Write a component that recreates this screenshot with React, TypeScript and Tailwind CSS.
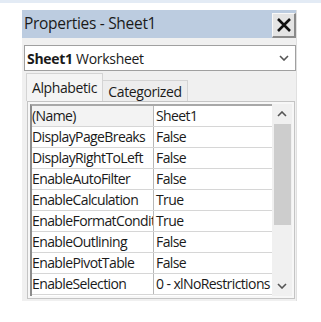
const rows: [string, string][] = [
  ['(Name)', 'Sheet1'],
  ['DisplayPageBreaks', 'False'],
  ['DisplayRightToLeft', 'False'],
  ['EnableAutoFilter', 'False'],
  ['EnableCalculation', 'True'],
  ['EnableFormatConditionsCalculation', 'True'],
  ['EnableOutlining', 'False'],
  ['EnablePivotTable', 'False'],
  ['EnableSelection', '0 - xlNoRestrictions'],
];

function Chevron({ up }: { up?: boolean }) {
  return (
    <svg width="10" height="6" viewBox="0 0 10 6" className={up ? 'rotate-180' : ''}>
      <path d="M1 1 L5 5 L9 1" fill="none" stroke="#555" strokeWidth="1.6" />
    </svg>
  );
}

export default function App() {
  return (
    <div
      className="w-[321px] h-[322px] bg-white overflow-hidden text-[#1a1a1a]"
      style={{ fontFamily: '"Open Sans", "Noto Sans", sans-serif' }}
    >
      <div className="h-[3px] bg-[#e3ebf5]" />
      <div className="ml-[22px] mt-[7px] w-[275px] h-[291px] bg-[#f0f0f0] border-r border-[#e0e0e0] flex flex-col">
        <div className="h-[28px] bg-[#bccce0] flex items-center justify-between pl-[2px]">
          <span className="text-[15.5px] leading-none tracking-[-0.3px]">Properties - Sheet1</span>
          <div className="w-[24px] h-[25px] mt-[3px] bg-[#e4e4e4] border-l border-t border-[#f8f8f8] border-r-2 border-b-2 border-r-[#8a8a8a] border-b-[#8a8a8a] flex items-center justify-center">
            <svg width="16" height="16" viewBox="0 0 16 16">
              <path d="M2 2 L14 14 M14 2 L2 14" stroke="#111" strokeWidth="2.6" />
            </svg>
          </div>
        </div>

        <div className="mt-[7px] ml-[2px] h-[26px] w-[272px] bg-white border border-[#a0a0a0] flex items-center justify-between pl-[2px] pr-[6px] text-[14px] tracking-[-0.3px]">
          <span>
            <span className="font-bold">Sheet1</span> Worksheet
          </span>
          <Chevron />
        </div>

        <div className="flex items-end ml-[4px] h-[30px]">
          <div className="w-[77px] h-[28px] border border-b-0 border-[#d4d4d4] bg-[#f4f4f4] flex items-center justify-center text-[14px] tracking-[-0.4px]">
            Alphabetic
          </div>
          <div className="w-[85px] h-[21px] border border-l-0 border-b-0 border-[#d4d4d4] bg-[#ededed] flex items-center justify-center text-[14px] tracking-[-0.4px]">
            Categorized
          </div>
        </div>

        <div className="ml-[5px] w-[268px] h-[198px] border border-[#c4c4c4] bg-[#f7f7f7] p-[2px] flex">
          <div className="flex-1 flex flex-col border-l-2 border-t-2 border-l-[#8c8c8c] border-t-[#a8a8a8] bg-white">
            {rows.map(([name, value], i) => (
              <div key={name} className="h-[21px] flex border-b border-[#d6d6d6] text-[14px] leading-none tracking-[-0.6px]">
                <div
                  className={`w-[122px] shrink-0 overflow-hidden whitespace-nowrap flex items-center border-r border-[#b8b8b8] ${
                    i === 0 ? 'bg-[#f3f3f3]' : 'bg-white'
                  }`}
                >
                  {name}
                </div>
                <div className="flex-1 overflow-hidden whitespace-nowrap flex items-center pl-[2px]">{value}</div>
              </div>
            ))}
          </div>
          <div className="w-[20px] shrink-0 bg-[#f0f0f0] flex flex-col items-center">
            <div className="h-[20px] flex items-center justify-center">
              <Chevron up />
            </div>
            <div className="w-[17px] h-[101px] bg-[#cdcdcd]" />
            <div className="flex-1" />
            <div className="h-[20px] flex items-center justify-center">
              <Chevron />
            </div>
          </div>
        </div>
      </div>
    </div>
  );
}
